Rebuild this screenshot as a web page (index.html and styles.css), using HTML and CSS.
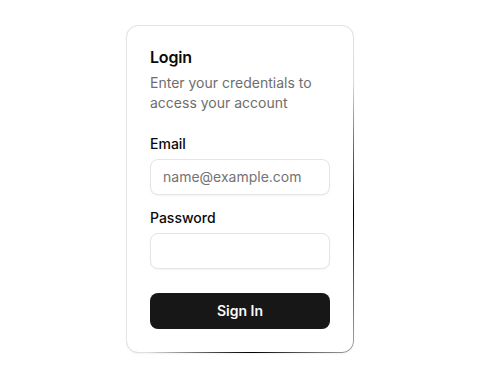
FILE: index.html
```html
<!DOCTYPE html>
<html lang="en">
<head>
<meta charset="utf-8">
<title>Login</title>
<link rel="stylesheet" href="styles.css">
</head>
<body>
<div class="card">
  <div class="card-header">
    <h1 class="card-title">Login</h1>
    <p class="card-desc">Enter your credentials to access your account</p>
  </div>
  <form class="card-content">
    <div class="field">
      <label class="label" for="email">Email</label>
      <input class="input" id="email" type="email" placeholder="name@example.com">
    </div>
    <div class="field">
      <label class="label" for="password">Password</label>
      <input class="input" id="password" type="password">
    </div>
    <button class="button" type="button">Sign In</button>
  </form>
</div>
</body>
</html>
```

FILE: styles.css
```css
* { box-sizing: border-box; }
html, body { margin: 0; padding: 0; }
body {
  height: 100vh;
  padding-bottom: 2px;
  display: flex;
  align-items: center;
  justify-content: center;
  background: #fff;
  font-family: Inter, "Noto Sans", sans-serif;
  color: #0a0a0a;
}
.card {
  position: relative;
  width: 228px;
  background: #fff;
  border: 1px solid #e5e5e5;
  border-radius: 12px;
  box-shadow: 0 1px 2px rgba(0,0,0,0.05);
}
.card::after {
  content: "";
  position: absolute;
  inset: -1px;
  border-radius: 12px;
  padding: 1px;
  background:
    radial-gradient(ellipse 40% 40% at 100% 58%, #000 0%, rgba(0,0,0,0) 100%),
    radial-gradient(ellipse 45% 40% at 55% 100%, #000 0%, rgba(0,0,0,0) 100%),
    linear-gradient(to bottom right, #e5e5e5 50%, #a0a0a0);
  -webkit-mask: linear-gradient(#000 0 0) content-box, linear-gradient(#000 0 0);
  -webkit-mask-composite: xor;
  mask-composite: exclude;
  pointer-events: none;
}
.card-header {
  display: flex;
  flex-direction: column;
  gap: 8px;
  padding: 23px 23px 24px;
}
.card-title {
  margin: 0;
  font-size: 16px;
  line-height: 1;
  font-weight: 600;
  letter-spacing: -0.2px;
}
.card-desc {
  margin: 0;
  font-size: 14px;
  line-height: 20px;
  color: #6e6e6e;
}
.card-content {
  display: flex;
  flex-direction: column;
  padding: 0 23px 23px;
  margin: 0;
}
.field {
  display: flex;
  flex-direction: column;
  gap: 8px;
  margin-bottom: 16px;
}
.field + .field { margin-bottom: 24px; }
.label {
  font-size: 14px;
  line-height: 14px;
  font-weight: 500;
}
.input {
  height: 36px;
  width: 100%;
  border: 1px solid #e5e5e5;
  border-radius: 8px;
  padding: 0 12px;
  font-family: inherit;
  font-size: 14px;
  color: #0a0a0a;
  background: #fff;
  box-shadow: 0 1px 2px rgba(0,0,0,0.05);
  outline: none;
}
.input::placeholder { color: #737373; }
.button {
  height: 36px;
  width: 100%;
  border: none;
  border-radius: 8px;
  background: #171717;
  color: #fafafa;
  font-family: inherit;
  font-size: 14px;
  font-weight: 600;
  cursor: pointer;
}
```
